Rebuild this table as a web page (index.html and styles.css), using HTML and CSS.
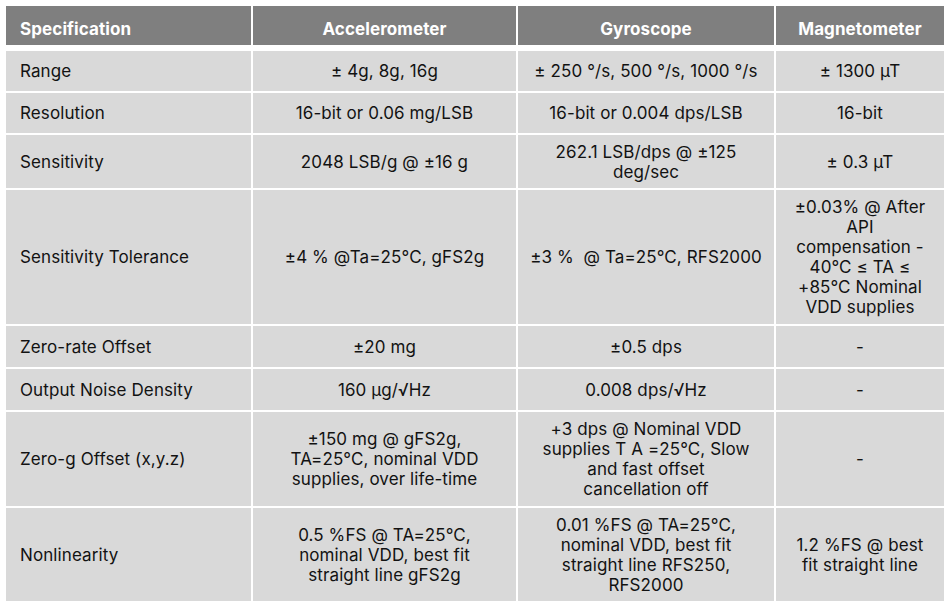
FILE: index.html
```html
<!DOCTYPE html>
<html>
<head>
<meta charset="utf-8">
<link rel="stylesheet" href="styles.css">
</head>
<body>
<div class="spec" role="table">
  <div class="cell head label">Specification</div>
  <div class="cell head">Accelerometer</div>
  <div class="cell head">Gyroscope</div>
  <div class="cell head">Magnetometer</div>

  <div class="cell label">Range</div>
  <div class="cell">± 4g, 8g, 16g</div>
  <div class="cell">± 250 °/s, 500 °/s, 1000 °/s</div>
  <div class="cell">± 1300 µT</div>

  <div class="cell label">Resolution</div>
  <div class="cell">16-bit or 0.06 mg/LSB</div>
  <div class="cell">16-bit or 0.004 dps/LSB</div>
  <div class="cell">16-bit</div>

  <div class="cell label">Sensitivity</div>
  <div class="cell">2048 LSB/g @ ±16 g</div>
  <div class="cell">262.1 LSB/dps @ ±125<br>deg/sec</div>
  <div class="cell">± 0.3 µT</div>

  <div class="cell label">Sensitivity Tolerance</div>
  <div class="cell">±4 % @Ta=25°C, gFS2g</div>
  <div class="cell">±3 %&nbsp; @ Ta=25°C, RFS2000</div>
  <div class="cell">±0.03% @ After<br>API<br>compensation -<br>40°C ≤ TA ≤<br>+85°C Nominal<br>VDD supplies</div>

  <div class="cell label">Zero-rate Offset</div>
  <div class="cell">±20 mg</div>
  <div class="cell">±0.5 dps</div>
  <div class="cell">-</div>

  <div class="cell label">Output Noise Density</div>
  <div class="cell">160 µg/√Hz</div>
  <div class="cell">0.008 dps/√Hz</div>
  <div class="cell">-</div>

  <div class="cell label">Zero-g Offset (x,y.z)</div>
  <div class="cell">±150 mg @ gFS2g,<br>TA=25°C, nominal VDD<br>supplies, over life-time</div>
  <div class="cell">+3 dps @ Nominal VDD<br>supplies T A =25°C, Slow<br>and fast offset<br>cancellation off</div>
  <div class="cell">-</div>

  <div class="cell label">Nonlinearity</div>
  <div class="cell">0.5 %FS @ TA=25°C,<br>nominal VDD, best fit<br>straight line gFS2g</div>
  <div class="cell">0.01 %FS @ TA=25°C,<br>nominal VDD, best fit<br>straight line RFS250,<br>RFS2000</div>
  <div class="cell">1.2 %FS @ best<br>fit straight line</div>
</div>
</body>
</html>
```
FILE: styles.css
```css
html, body {
  margin: 0;
  padding: 0;
  background: #ffffff;
}

body {
  font-family: Inter, "Noto Sans", sans-serif;
  font-size: 17px;
  color: #121212;
}

.spec {
  display: grid;
  grid-template-columns: 245px 263px 256px 168px;
  grid-template-rows: 43px 40px 40px 53px 134px 41px 41px 94px 93px;
  column-gap: 2px;
  row-gap: 2px;
  margin: 6px 0 0 6px;
  width: 938px;
}

.cell {
  box-sizing: border-box;
  background: #d9d9d9;
  display: flex;
  align-items: center;
  justify-content: center;
  text-align: center;
  line-height: 20px;
  padding: 0 8px;
  letter-spacing: 0.1px;
}

.cell.label {
  justify-content: flex-start;
  text-align: left;
  padding-left: 14px;
}

.cell.head {
  background: #7f7f7f;
  color: #ffffff;
  font-weight: 700;
  height: 39px;
  align-self: start;
  padding-top: 7px;
}
```
